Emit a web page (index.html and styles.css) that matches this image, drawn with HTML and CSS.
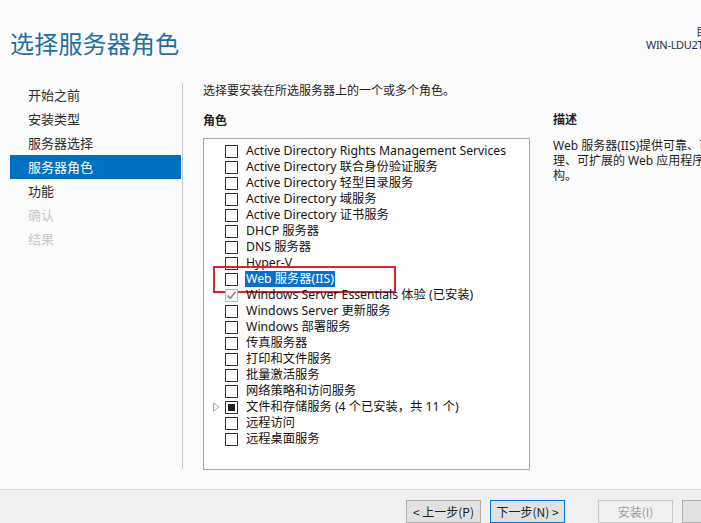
FILE: index.html
```html
<!DOCTYPE html>
<html lang="zh-CN">
<head>
<meta charset="utf-8">
<link rel="stylesheet" href="styles.css">
</head>
<body>
<div class="page">
  <header class="header">
    <h1 class="title">选择服务器角色</h1>
    <div class="server">
      <div class="server-label">目标服务器</div>
      <div class="server-name">WIN-LDU2TQ8R5NE</div>
    </div>
  </header>
  <main class="main">
    <nav class="nav">
      <div class="nav-item">开始之前</div>
      <div class="nav-item">安装类型</div>
      <div class="nav-item">服务器选择</div>
      <div class="nav-item active">服务器角色</div>
      <div class="nav-item">功能</div>
      <div class="nav-item disabled">确认</div>
      <div class="nav-item disabled">结果</div>
    </nav>
    <section class="content">
      <p class="intro">选择要安装在所选服务器上的一个或多个角色。</p>
      <h2 class="section-title">角色</h2>
      <div class="listbox">
        <div class="row"><span class="cb"></span><span class="label">Active Directory Rights Management Services</span></div>
        <div class="row"><span class="cb"></span><span class="label">Active Directory 联合身份验证服务</span></div>
        <div class="row"><span class="cb"></span><span class="label">Active Directory 轻型目录服务</span></div>
        <div class="row"><span class="cb"></span><span class="label">Active Directory 域服务</span></div>
        <div class="row"><span class="cb"></span><span class="label">Active Directory 证书服务</span></div>
        <div class="row"><span class="cb"></span><span class="label">DHCP 服务器</span></div>
        <div class="row"><span class="cb"></span><span class="label">DNS 服务器</span></div>
        <div class="row"><span class="cb"></span><span class="label">Hyper-V</span></div>
        <div class="row marked"><span class="cb"></span><span class="label selected">Web 服务器(IIS)</span><span class="redbox"></span></div>
        <div class="row"><span class="cb checked"><svg width="11" height="11" viewBox="0 0 11 11"><path d="M1.5 5.5 L4.2 8.3 L9.5 2" fill="none" stroke="#8a8a8a" stroke-width="1.6"/></svg></span><span class="label">Windows Server Essentials 体验 (已安装)</span></div>
        <div class="row"><span class="cb"></span><span class="label">Windows Server 更新服务</span></div>
        <div class="row"><span class="cb"></span><span class="label">Windows 部署服务</span></div>
        <div class="row"><span class="cb"></span><span class="label">传真服务器</span></div>
        <div class="row"><span class="cb"></span><span class="label">打印和文件服务</span></div>
        <div class="row"><span class="cb"></span><span class="label">批量激活服务</span></div>
        <div class="row"><span class="cb"></span><span class="label">网络策略和访问服务</span></div>
        <div class="row"><span class="expander"><svg width="7" height="10" viewBox="0 0 7 10"><path d="M0.5 0.8 L6 5 L0.5 9.2 Z" fill="none" stroke="#a6a6a6" stroke-width="1"/></svg></span><span class="cb partial"><span class="fill"></span></span><span class="label">文件和存储服务 (4 个已安装，共 11 个)</span></div>
        <div class="row"><span class="cb"></span><span class="label">远程访问</span></div>
        <div class="row"><span class="cb"></span><span class="label">远程桌面服务</span></div>
      </div>
    </section>
    <aside class="desc">
      <h2 class="section-title">描述</h2>
      <p class="desc-text">Web 服务器(IIS)提供可靠、可管<br>理、可扩展的 Web 应用程序基础结<br>构。</p>
    </aside>
  </main>
  <footer class="footer">
    <button class="btn">&lt; 上一步(P)</button>
    <button class="btn primary">下一步(N) &gt;</button>
    <button class="btn disabled install">安装(I)</button>
    <button class="btn">取消</button>
  </footer>
</div>
</body>
</html>
```
FILE: styles.css
```css
* { box-sizing: border-box; }
html, body {
  margin: 0;
  padding: 0;
  width: 701px;
  height: 523px;
  overflow: hidden;
  background: #fbfbfb;
  font-family: "Noto Sans", "Noto Sans CJK SC", sans-serif;
  color: #1e1e1e;
}
.page {
  width: 701px;
  height: 523px;
  display: flex;
  flex-direction: column;
  overflow: hidden;
}
.header {
  height: 83px;
  display: flex;
  flex-shrink: 0;
}
.title {
  margin: 27px 0 0 10px;
  font-family: "Noto Sans CJK SC", sans-serif;
  font-weight: 400;
  font-size: 24px;
  line-height: 32px;
  color: #1f6fa5;
  letter-spacing: 0.2px;
}
.server {
  margin-left: auto;
  width: 55px;
  flex-shrink: 0;
  padding-top: 24px;
  font-size: 11.5px;
  line-height: 14px;
  color: #1f2f47;
  white-space: nowrap;
  overflow: hidden;
}
.server-label { padding-left: 50px; font-family: "Noto Sans CJK SC", sans-serif; }
.server-name { font-family: "Noto Sans", sans-serif; font-size: 11px; letter-spacing: -0.3px; }

.main {
  height: 386px;
  display: flex;
  flex-shrink: 0;
}
.nav {
  margin-left: 10px;
  width: 173px;
  border-right: 1px solid #c8c8c8;
  padding-top: 0;
  flex-shrink: 0;
  font-family: "Noto Sans CJK SC", sans-serif;
  font-size: 13px;
}
.nav-item {
  height: 24px;
  line-height: 24px;
  padding-left: 18px;
  color: #2b2b2b;
}
.nav-item.active {
  background: #0070c0;
  color: #fff;
  width: 171px;
}
.nav-item.disabled { color: #c9c9c9; }

.content {
  margin-left: 20px;
  width: 327px;
  flex-shrink: 0;
}
.intro {
  margin: -1px 0 0 0;
  font-family: "Noto Sans CJK SC", sans-serif;
  font-size: 12px;
  line-height: 16px;
  color: #1e1e1e;
}
.section-title {
  margin: 14px 0 0 0;
  font-family: "Noto Sans CJK SC", sans-serif;
  font-size: 12px;
  font-weight: 700;
  line-height: 16px;
  color: #1e1e1e;
}
.listbox {
  margin-top: 10px;
  height: 332px;
  border: 1px solid #a8a8a8;
  background: #fff;
  padding-top: 4px;
}
.row {
  position: relative;
  height: 16px;
  display: flex;
  align-items: center;
  padding-left: 21px;
  font-size: 12.25px;
  line-height: 16px;
  color: #111;
  white-space: nowrap;
}
.cb {
  width: 13px;
  height: 13px;
  border: 1px solid #333;
  background: #fff;
  flex-shrink: 0;
  display: flex;
  align-items: center;
  justify-content: center;
}
.cb.checked { border-color: #bcbcbc; background: #f4f4f4; }
.cb.partial .fill { width: 7px; height: 7px; background: #1e1e1e; }
.expander {
  position: absolute;
  left: 9px;
  top: 3px;
  width: 7px;
  height: 10px;
  display: flex;
}
.label {
  margin-left: 7px;
  padding: 0 1px;
}
.label.selected {
  background: #0a6ed1;
  color: #fff;
}
.redbox {
  position: absolute;
  left: 9px;
  top: -5px;
  width: 183px;
  height: 27px;
  border: 2px solid #e0202a;
  pointer-events: none;
}

.desc {
  margin-left: 23px;
  width: 148px;
  flex-shrink: 0;
  white-space: nowrap;
  overflow: hidden;
}
.desc .section-title { margin-top: 28px; }
.desc-text {
  margin: 11px 0 0 0;
  font-size: 12px;
  line-height: 15px;
  color: #1e1e1e;
}

.footer {
  margin-top: 20px;
  flex: 1;
  background: #f0f0f0;
  border-top: 1px solid #dadada;
  display: flex;
  padding: 10px 0 0 406px;
  gap: 9px;
  white-space: nowrap;
}
.btn {
  width: 75px;
  height: 23px;
  flex-shrink: 0;
  background: #e1e1e1;
  border: 1px solid #adadad;
  font-family: "Noto Sans CJK SC", sans-serif;
  font-size: 12px;
  color: #1e1e1e;
  padding: 0;
  line-height: 20px;
}
.btn.primary { border-color: #0078d7; }
.btn.disabled { background: #f0f0f0; border-color: #c8c8c8; color: #a0a0a0; }
.btn.install { margin-left: 24px; }
```
